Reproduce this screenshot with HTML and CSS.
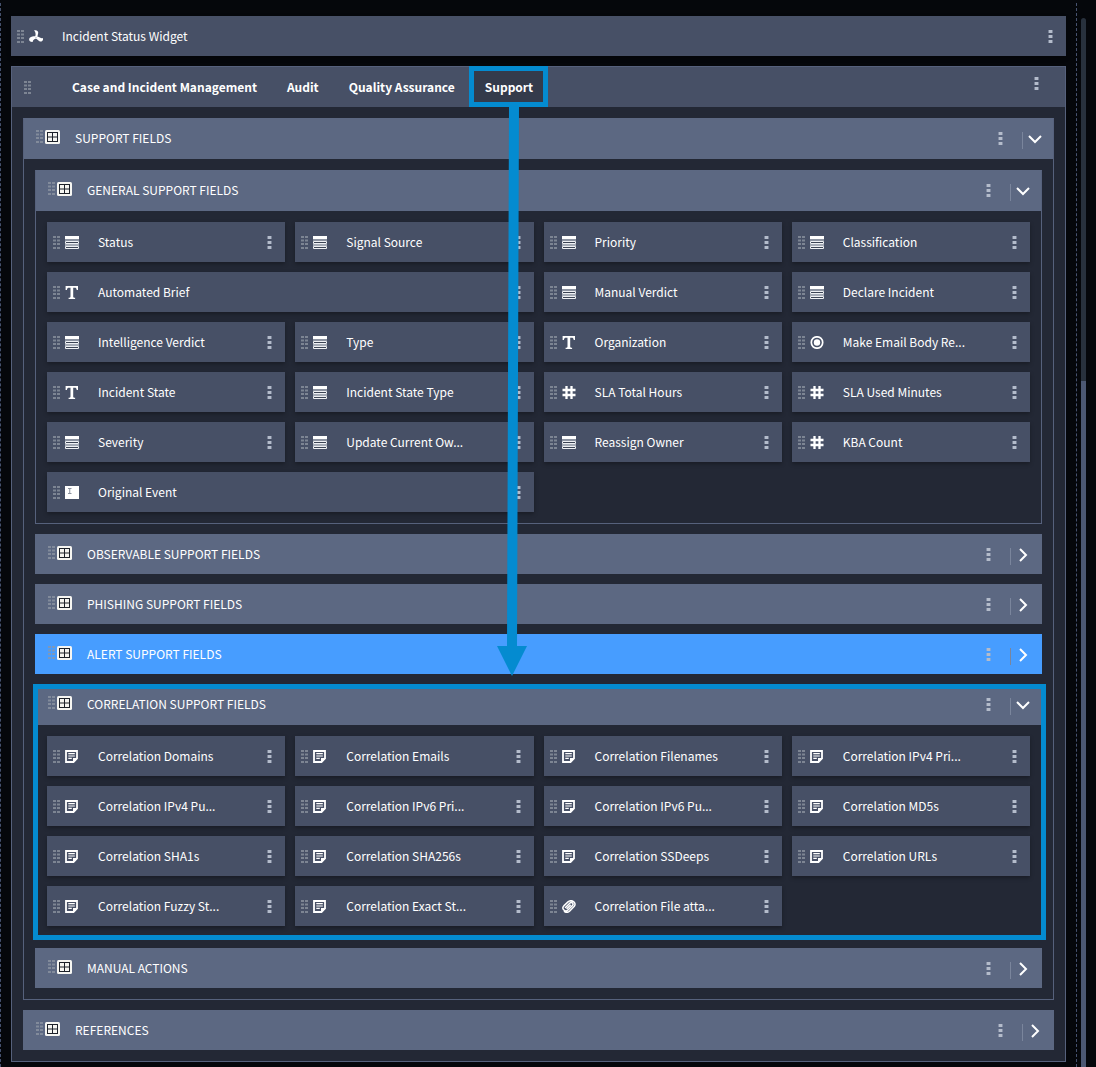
FILE: index.html
```html
<!DOCTYPE html>
<html lang="en">
<head>
<meta charset="utf-8">
<title>Layout builder</title>
<link rel="stylesheet" href="styles.css">
</head>
<body>
<svg class="sprite" aria-hidden="true">
  <symbol id="grip" viewBox="0 0 7 13"><path d="M0 0h3v2H0zM4 0h3v2H4zM0 3.5h3v2H0zM4 3.5h3v2H4zM0 7h3v2H0zM4 7h3v2H4zM0 11h3v2H0zM4 11h3v2H4z" fill="#8f97a3" opacity=".75"/></symbol>
  <symbol id="kebab" viewBox="0 0 5 13"><path d="M0 0h5v3H0zM0 5h5v3H0zM0 10h5v3H0z" fill="#a9b2c4" opacity=".5"/><path d="M1 0h3v3H1zM1 5h3v3H1zM1 10h3v3H1z" fill="#b4bccb"/></symbol>
  <symbol id="down" viewBox="0 0 14 14"><path d="M1 4l6 6 6-6" fill="none" stroke="#fff" stroke-width="2"/></symbol>
  <symbol id="right" viewBox="0 0 14 14"><path d="M4 1l6 6-6 6" fill="none" stroke="#fff" stroke-width="2"/></symbol>
  <symbol id="grid" viewBox="0 0 15 14"><rect x="0" y="0" width="15" height="14" rx="1.5" fill="#f6f6f2"/><path d="M2 2h11v10H2z" fill="#1d2129"/><path d="M3 3h4v3.500H3zM8 3h4v3.500H8zM3 7.500h4V11H3zM8 7.500h4V11H8z" fill="#f6f6f2"/></symbol>
  <symbol id="list" viewBox="0 0 14 13"><path d="M0 0h14v3H0z" fill="#fff"/><path d="M0 3h14v2H0z" fill="#8b92a0"/><path d="M.5 5.500h13v2H.5zM.5 10.500h13v2H.5z" fill="#3b4354" stroke="#eef0f3"/><path d="M0 8h14v2H0z" fill="#a6acb7"/></symbol>
  <symbol id="text" viewBox="0 0 14 13"><path d="M.6 0h12.400v4h-1.300c-.2-1.700-.7-2.300-2.100-2.300H8.200v8.500c0 1.200.4 1.500 1.900 1.600V13H3.600v-1.200c1.500-.1 1.900-.4 1.900-1.600V1.700H4.100C2.700 1.700 2.100 2.300 1.900 4H.6z" fill="#fff"/></symbol>
  <symbol id="hash" viewBox="0 0 14 13"><path d="M4.500 0v13M9.500 0v13M.5 4h13M.5 9h13" stroke="#fff" stroke-width="2.300" fill="none"/></symbol>
  <symbol id="radio" viewBox="0 0 14 13"><circle cx="7" cy="6.500" r="5.700" fill="none" stroke="#fff" stroke-width="1.700"/><circle cx="7" cy="6.500" r="3.200" fill="#fff"/></symbol>
  <symbol id="event" viewBox="0 0 14 13"><path d="M0 0h14v13H0z" fill="#fff"/><path d="M3 2.500h3.500M4.750 2.500v5M3 7.500h3.500" stroke="#8b929e" fill="none"/></symbol>
  <symbol id="note" viewBox="0 0 14 13"><path d="M1 1h11v7.500L8.500 12H1z" fill="none" stroke="#fff" stroke-width="1.800"/><path d="M3.300 3.700h6.500M3.300 6h6.500M3.300 8.300h3.500" stroke="#fff" stroke-width="1.200"/><path d="M8 12.500V8h4.800z" fill="#fff"/></symbol>
  <symbol id="clip" viewBox="0 0 14 13"><path d="M3.500 7.500L8 3a1.700 1.700 0 0 1 2.500 2.400L6 9.900a2.900 2.900 0 0 1-4.200-4L6 1.900C9.500-1 15 2.500 12.300 6.300L7.500 11.200c-1.700 1.700-4 1.300-5 .2M8.300 5.200L5 8.500" fill="none" stroke="#fff" stroke-width="1.500" stroke-linecap="round"/></symbol>
  <symbol id="fan" viewBox="0 0 14 13"><path d="M5 .5C7.200-.5 9.400.6 9.200 2.900L8.500 6.300 6 6.900C7 4.500 6.800 2.300 5 .5zM7.600 5.900l2.200 1.200c1.500 1 3 1.400 4.300.8.400 3-1.700 4.400-3.700 3.300L7 8.600zM6.300 6l.8 2.500c-2 .4-3 1.500-3.500 3.400C.2 12-.6 9.600.8 7.800 2.300 6.400 4.300 6.500 6.300 6z" fill="#fff"/></symbol>
</svg>

<div class="app">
<main class="canvas">
  <div class="field">
    <svg class="grip"><use href="#grip"/></svg><svg class="icon"><use href="#fan"/></svg><span class="label">Incident Status Widget</span><button class="kebab" aria-label="Widget menu"><svg><use href="#kebab"/></svg></button>
  </div>

  <div class="panel">
    <div class="tabbar">
      <svg class="grip"><use href="#grip"/></svg>
      <div class="tabs" role="tablist">
        <button class="tab" role="tab">Case and Incident Management</button>
        <button class="tab" role="tab">Audit</button>
        <button class="tab" role="tab">Quality Assurance</button>
        <button class="tab active" role="tab" aria-selected="true">Support<svg class="arrow" viewBox="0 0 30 569" aria-hidden="true"><path d="M12 0h10L20 539h10L15 569 0 539h10z" fill="#048bd0"/></svg></button>
      </div>
      <button class="kebab" aria-label="Tabs menu"><svg><use href="#kebab"/></svg></button>
    </div>

    <div class="body">
      <section class="section open">
        <header class="head"><svg class="grip"><use href="#grip"/></svg><svg class="icon"><use href="#grid"/></svg><h2 class="title">SUPPORT FIELDS</h2><button class="kebab" aria-label="Menu"><svg><use href="#kebab"/></svg></button><button class="toggle" aria-label="Collapse"><svg><use href="#down"/></svg></button></header>
        <div class="body">

          <section class="section open">
            <header class="head"><svg class="grip"><use href="#grip"/></svg><svg class="icon"><use href="#grid"/></svg><h3 class="title">GENERAL SUPPORT FIELDS</h3><button class="kebab" aria-label="Menu"><svg><use href="#kebab"/></svg></button><button class="toggle" aria-label="Collapse"><svg><use href="#down"/></svg></button></header>
            <div class="fields">
              <div class="field"><svg class="grip"><use href="#grip"/></svg><svg class="icon"><use href="#list"/></svg><span class="label">Status</span><button class="kebab" aria-label="Menu"><svg><use href="#kebab"/></svg></button></div>
              <div class="field"><svg class="grip"><use href="#grip"/></svg><svg class="icon"><use href="#list"/></svg><span class="label">Signal Source</span><button class="kebab" aria-label="Menu"><svg><use href="#kebab"/></svg></button></div>
              <div class="field"><svg class="grip"><use href="#grip"/></svg><svg class="icon"><use href="#list"/></svg><span class="label">Priority</span><button class="kebab" aria-label="Menu"><svg><use href="#kebab"/></svg></button></div>
              <div class="field"><svg class="grip"><use href="#grip"/></svg><svg class="icon"><use href="#list"/></svg><span class="label">Classification</span><button class="kebab" aria-label="Menu"><svg><use href="#kebab"/></svg></button></div>
              <div class="field wide"><svg class="grip"><use href="#grip"/></svg><svg class="icon"><use href="#text"/></svg><span class="label">Automated Brief</span><button class="kebab" aria-label="Menu"><svg><use href="#kebab"/></svg></button></div>
              <div class="field"><svg class="grip"><use href="#grip"/></svg><svg class="icon"><use href="#list"/></svg><span class="label">Manual Verdict</span><button class="kebab" aria-label="Menu"><svg><use href="#kebab"/></svg></button></div>
              <div class="field"><svg class="grip"><use href="#grip"/></svg><svg class="icon"><use href="#list"/></svg><span class="label">Declare Incident</span><button class="kebab" aria-label="Menu"><svg><use href="#kebab"/></svg></button></div>
              <div class="field"><svg class="grip"><use href="#grip"/></svg><svg class="icon"><use href="#list"/></svg><span class="label">Intelligence Verdict</span><button class="kebab" aria-label="Menu"><svg><use href="#kebab"/></svg></button></div>
              <div class="field"><svg class="grip"><use href="#grip"/></svg><svg class="icon"><use href="#list"/></svg><span class="label">Type</span><button class="kebab" aria-label="Menu"><svg><use href="#kebab"/></svg></button></div>
              <div class="field"><svg class="grip"><use href="#grip"/></svg><svg class="icon"><use href="#text"/></svg><span class="label">Organization</span><button class="kebab" aria-label="Menu"><svg><use href="#kebab"/></svg></button></div>
              <div class="field"><svg class="grip"><use href="#grip"/></svg><svg class="icon"><use href="#radio"/></svg><span class="label">Make Email Body Re...</span><button class="kebab" aria-label="Menu"><svg><use href="#kebab"/></svg></button></div>
              <div class="field"><svg class="grip"><use href="#grip"/></svg><svg class="icon"><use href="#text"/></svg><span class="label">Incident State</span><button class="kebab" aria-label="Menu"><svg><use href="#kebab"/></svg></button></div>
              <div class="field"><svg class="grip"><use href="#grip"/></svg><svg class="icon"><use href="#list"/></svg><span class="label">Incident State Type</span><button class="kebab" aria-label="Menu"><svg><use href="#kebab"/></svg></button></div>
              <div class="field"><svg class="grip"><use href="#grip"/></svg><svg class="icon"><use href="#hash"/></svg><span class="label">SLA Total Hours</span><button class="kebab" aria-label="Menu"><svg><use href="#kebab"/></svg></button></div>
              <div class="field"><svg class="grip"><use href="#grip"/></svg><svg class="icon"><use href="#hash"/></svg><span class="label">SLA Used Minutes</span><button class="kebab" aria-label="Menu"><svg><use href="#kebab"/></svg></button></div>
              <div class="field"><svg class="grip"><use href="#grip"/></svg><svg class="icon"><use href="#list"/></svg><span class="label">Severity</span><button class="kebab" aria-label="Menu"><svg><use href="#kebab"/></svg></button></div>
              <div class="field"><svg class="grip"><use href="#grip"/></svg><svg class="icon"><use href="#list"/></svg><span class="label">Update Current Ow...</span><button class="kebab" aria-label="Menu"><svg><use href="#kebab"/></svg></button></div>
              <div class="field"><svg class="grip"><use href="#grip"/></svg><svg class="icon"><use href="#list"/></svg><span class="label">Reassign Owner</span><button class="kebab" aria-label="Menu"><svg><use href="#kebab"/></svg></button></div>
              <div class="field"><svg class="grip"><use href="#grip"/></svg><svg class="icon"><use href="#hash"/></svg><span class="label">KBA Count</span><button class="kebab" aria-label="Menu"><svg><use href="#kebab"/></svg></button></div>
              <div class="field wide"><svg class="grip"><use href="#grip"/></svg><svg class="icon"><use href="#event"/></svg><span class="label">Original Event</span><button class="kebab" aria-label="Menu"><svg><use href="#kebab"/></svg></button></div>
            </div>
          </section>

          <section class="section">
            <header class="head"><svg class="grip"><use href="#grip"/></svg><svg class="icon"><use href="#grid"/></svg><h3 class="title">OBSERVABLE SUPPORT FIELDS</h3><button class="kebab" aria-label="Menu"><svg><use href="#kebab"/></svg></button><button class="toggle" aria-label="Expand"><svg><use href="#right"/></svg></button></header>
          </section>
          <section class="section">
            <header class="head"><svg class="grip"><use href="#grip"/></svg><svg class="icon"><use href="#grid"/></svg><h3 class="title">PHISHING SUPPORT FIELDS</h3><button class="kebab" aria-label="Menu"><svg><use href="#kebab"/></svg></button><button class="toggle" aria-label="Expand"><svg><use href="#right"/></svg></button></header>
          </section>
          <section class="section selected">
            <header class="head"><svg class="grip"><use href="#grip"/></svg><svg class="icon"><use href="#grid"/></svg><h3 class="title">ALERT SUPPORT FIELDS</h3><button class="kebab" aria-label="Menu"><svg><use href="#kebab"/></svg></button><button class="toggle" aria-label="Expand"><svg><use href="#right"/></svg></button></header>
          </section>

          <section class="section open marked">
            <header class="head"><svg class="grip"><use href="#grip"/></svg><svg class="icon"><use href="#grid"/></svg><h3 class="title">CORRELATION SUPPORT FIELDS</h3><button class="kebab" aria-label="Menu"><svg><use href="#kebab"/></svg></button><button class="toggle" aria-label="Collapse"><svg><use href="#down"/></svg></button></header>
            <div class="fields">
              <div class="field"><svg class="grip"><use href="#grip"/></svg><svg class="icon"><use href="#note"/></svg><span class="label">Correlation Domains</span><button class="kebab" aria-label="Menu"><svg><use href="#kebab"/></svg></button></div>
              <div class="field"><svg class="grip"><use href="#grip"/></svg><svg class="icon"><use href="#note"/></svg><span class="label">Correlation Emails</span><button class="kebab" aria-label="Menu"><svg><use href="#kebab"/></svg></button></div>
              <div class="field"><svg class="grip"><use href="#grip"/></svg><svg class="icon"><use href="#note"/></svg><span class="label">Correlation Filenames</span><button class="kebab" aria-label="Menu"><svg><use href="#kebab"/></svg></button></div>
              <div class="field"><svg class="grip"><use href="#grip"/></svg><svg class="icon"><use href="#note"/></svg><span class="label">Correlation IPv4 Pri...</span><button class="kebab" aria-label="Menu"><svg><use href="#kebab"/></svg></button></div>
              <div class="field"><svg class="grip"><use href="#grip"/></svg><svg class="icon"><use href="#note"/></svg><span class="label">Correlation IPv4 Pu...</span><button class="kebab" aria-label="Menu"><svg><use href="#kebab"/></svg></button></div>
              <div class="field"><svg class="grip"><use href="#grip"/></svg><svg class="icon"><use href="#note"/></svg><span class="label">Correlation IPv6 Pri...</span><button class="kebab" aria-label="Menu"><svg><use href="#kebab"/></svg></button></div>
              <div class="field"><svg class="grip"><use href="#grip"/></svg><svg class="icon"><use href="#note"/></svg><span class="label">Correlation IPv6 Pu...</span><button class="kebab" aria-label="Menu"><svg><use href="#kebab"/></svg></button></div>
              <div class="field"><svg class="grip"><use href="#grip"/></svg><svg class="icon"><use href="#note"/></svg><span class="label">Correlation MD5s</span><button class="kebab" aria-label="Menu"><svg><use href="#kebab"/></svg></button></div>
              <div class="field"><svg class="grip"><use href="#grip"/></svg><svg class="icon"><use href="#note"/></svg><span class="label">Correlation SHA1s</span><button class="kebab" aria-label="Menu"><svg><use href="#kebab"/></svg></button></div>
              <div class="field"><svg class="grip"><use href="#grip"/></svg><svg class="icon"><use href="#note"/></svg><span class="label">Correlation SHA256s</span><button class="kebab" aria-label="Menu"><svg><use href="#kebab"/></svg></button></div>
              <div class="field"><svg class="grip"><use href="#grip"/></svg><svg class="icon"><use href="#note"/></svg><span class="label">Correlation SSDeeps</span><button class="kebab" aria-label="Menu"><svg><use href="#kebab"/></svg></button></div>
              <div class="field"><svg class="grip"><use href="#grip"/></svg><svg class="icon"><use href="#note"/></svg><span class="label">Correlation URLs</span><button class="kebab" aria-label="Menu"><svg><use href="#kebab"/></svg></button></div>
              <div class="field"><svg class="grip"><use href="#grip"/></svg><svg class="icon"><use href="#note"/></svg><span class="label">Correlation Fuzzy St...</span><button class="kebab" aria-label="Menu"><svg><use href="#kebab"/></svg></button></div>
              <div class="field"><svg class="grip"><use href="#grip"/></svg><svg class="icon"><use href="#note"/></svg><span class="label">Correlation Exact St...</span><button class="kebab" aria-label="Menu"><svg><use href="#kebab"/></svg></button></div>
              <div class="field"><svg class="grip"><use href="#grip"/></svg><svg class="icon"><use href="#clip"/></svg><span class="label">Correlation File atta...</span><button class="kebab" aria-label="Menu"><svg><use href="#kebab"/></svg></button></div>
            </div>
          </section>

          <section class="section">
            <header class="head"><svg class="grip"><use href="#grip"/></svg><svg class="icon"><use href="#grid"/></svg><h3 class="title">MANUAL ACTIONS</h3><button class="kebab" aria-label="Menu"><svg><use href="#kebab"/></svg></button><button class="toggle" aria-label="Expand"><svg><use href="#right"/></svg></button></header>
          </section>
        </div>
      </section>

      <section class="section">
        <header class="head"><svg class="grip"><use href="#grip"/></svg><svg class="icon"><use href="#grid"/></svg><h2 class="title">REFERENCES</h2><button class="kebab" aria-label="Menu"><svg><use href="#kebab"/></svg></button><button class="toggle" aria-label="Expand"><svg><use href="#right"/></svg></button></header>
      </section>
    </div>
  </div>
</main>
<div class="scroll"><div class="thumb"></div></div>
</div>
</body>
</html>
```

FILE: styles.css
```css
* { box-sizing: border-box; }

body {
  margin: 0;
  background: #05070b;
  color: #fff;
  font: 400 12px/20px "Noto Sans CJK SC", "Noto Sans", sans-serif;
}

button {
  margin: 0;
  padding: 0;
  border: 0;
  background: none;
  color: inherit;
  font: inherit;
}

svg { display: block; flex: none; }
.sprite { position: absolute; width: 0; height: 0; }

.app {
  display: flex;
  gap: 4px;
  min-height: 100vh;
  padding-right: 10px;
}

.canvas {
  flex: 1;
  min-width: 0;
  margin-top: 3px;
  padding: 13px 10px 5px;
  border: dashed #46526f;
  border-width: 0 1px;
  display: flex;
  flex-direction: column;
  gap: 10px;
}

.scroll {
  width: 5px;
  margin-top: 18px;
  padding-top: 363px;
  border-radius: 3px 3px 0 0;
  background: #28313d;
}
.thumb { height: 100%; background: #4c5873; }

.grip { width: 7px; height: 13px; }
.icon { width: 14px; height: 13px; }
.kebab svg { width: 5px; height: 13px; }

/* field cards */
.field {
  display: flex;
  align-items: center;
  height: 40px;
  padding: 0 13px 0 6px;
  background: #475066;
  box-shadow: 0 2px 4px rgba(0, 0, 0, .3);
}
.field .icon { margin: 0 19px 0 5px; }
.field .label { flex: 1; min-width: 0; white-space: nowrap; }
.wide { grid-column: span 2; }

/* tabbed panel */
.panel { border: 1px solid #56617c; background: #232835; }

.tabbar {
  display: flex;
  align-items: center;
  height: 40px;
  padding: 0 26px 0 12px;
  background: #475066;
}
.tabs { display: flex; flex: 1; align-self: stretch; margin-left: 26px; }
.tab { padding: 0 15px; font-weight: 700; white-space: nowrap; }
.tabbar .kebab { align-self: flex-start; padding-top: 10px; }

.active { position: relative; background: #343b4b; }
.active::after {
  content: "";
  position: absolute;
  inset: -1px 0 0 -1px;
  border: 5px solid #048bd0;
}
.arrow {
  position: absolute;
  z-index: 2;
  top: 40px;
  left: 27px;
  width: 30px;
  height: 569px;
}

.body { display: flex; flex-direction: column; gap: 10px; padding: 11px; }

/* collapsible sections */
.section { border: 1px solid #5c6882; background: #5c6882; }
.open { border-color: #56617c; background: #232835; }
.selected { border-color: #479dff; background: #479dff; }

.head {
  display: flex;
  align-items: flex-start;
  height: 38px;
  padding: 11px 11px 0 12px;
}
.open > .head { height: 40px; background: #5c6882; }
.section.open { border-top-color: #5c6882; }
.head .icon { width: 15px; height: 14px; margin: 0 15px 0 2px; }
.title {
  flex: 1;
  margin: -2px 0 0;
  font-size: 12px;
  font-weight: 400;
}
.head .kebab { padding-top: 2px; }
.toggle {
  margin: 2px 0 0 19px;
  padding: 0 0 3px 5px;
  border-left: 1px solid #7a859c;
}
.toggle svg { width: 14px; height: 14px; }

.fields {
  display: grid;
  grid-template-columns: repeat(4, minmax(0, 1fr));
  gap: 10px;
  padding: 11px;
}

.marked { position: relative; }
.marked::after {
  content: "";
  position: absolute;
  inset: -1px -5px -3px -3px;
  border: 5px solid #048bd0;
  pointer-events: none;
}
```
